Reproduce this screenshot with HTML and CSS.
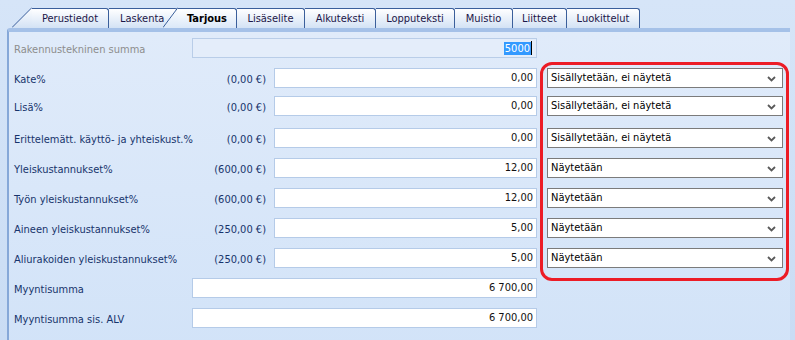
FILE: index.html
```html
<!DOCTYPE html>
<html lang="fi">
<head>
  <meta charset="UTF-8">
  <title>Tarjous</title>
  <link rel="stylesheet" href="styles.css">
</head>
<body>

<div class="tabs">
  <div class="tab first">
    <svg class="slant" width="20" height="21" viewBox="0 0 20 21">
      <defs>
        <linearGradient id="tabfill" x1="0" y1="0" x2="0" y2="1">
          <stop offset="0" stop-color="#ffffff"/>
          <stop offset="1" stop-color="#d3e2f5"/>
        </linearGradient>
      </defs>
      <polygon points="0,21 20,0.5 20,21" fill="url(#tabfill)"/>
      <line x1="0" y1="20.5" x2="20" y2="0.5" stroke="#3b5f9b" stroke-width="1"/>
    </svg>
    <span class="tab-body w77">Perustiedot</span>
  </div>
  <div class="tab">
    <span class="tab-body w69 left">Laskenta</span>
  </div>
  <div class="tab active">
    <svg class="slant" width="15" height="21" viewBox="0 0 15 21">
      <defs>
        <linearGradient id="tabsel" x1="0" y1="0" x2="0" y2="1">
          <stop offset="0" stop-color="#ffffff"/>
          <stop offset="1" stop-color="#dbe8f8"/>
        </linearGradient>
      </defs>
      <polygon points="0,21 15,0.5 15,21" fill="url(#tabsel)"/>
      <line x1="0" y1="20.5" x2="15" y2="0.5" stroke="#3b5f9b" stroke-width="1"/>
    </svg>
    <span class="tab-body w59">Tarjous</span>
  </div>
  <div class="tab"><span class="tab-body w68">Lisäselite</span></div>
  <div class="tab"><span class="tab-body w71">Alkuteksti</span></div>
  <div class="tab"><span class="tab-body w79">Lopputeksti</span></div>
  <div class="tab"><span class="tab-body w58">Muistio</span></div>
  <div class="tab"><span class="tab-body w54">Liitteet</span></div>
  <div class="tab"><span class="tab-body w73">Luokittelut</span></div>
</div>

<div class="panel">

  <div class="row first-row">
    <span class="label muted">Rakennustekninen summa</span>
    <div class="field wide disabled"><span class="selection">5000</span><span class="caret"></span></div>
  </div>

  <div class="row">
    <span class="label">Kate%</span>
    <span class="amount">(0,00 €)</span>
    <div class="field">0,00</div>
    <div class="select">Sisällytetään, ei näytetä
      <svg class="chevron" width="9" height="6" viewBox="0 0 9 6"><polyline points="1,1 4.5,4.5 8,1" fill="none" stroke="#5a5a5a" stroke-width="1.8"/></svg>
    </div>
  </div>

  <div class="row tight">
    <span class="label">Lisä%</span>
    <span class="amount">(0,00 €)</span>
    <div class="field">0,00</div>
    <div class="select">Sisällytetään, ei näytetä
      <svg class="chevron" width="9" height="6" viewBox="0 0 9 6"><polyline points="1,1 4.5,4.5 8,1" fill="none" stroke="#5a5a5a" stroke-width="1.8"/></svg>
    </div>
  </div>

  <div class="row loose">
    <span class="label">Erittelemätt. käyttö- ja yhteiskust.%</span>
    <span class="amount">(0,00 €)</span>
    <div class="field">0,00</div>
    <div class="select">Sisällytetään, ei näytetä
      <svg class="chevron" width="9" height="6" viewBox="0 0 9 6"><polyline points="1,1 4.5,4.5 8,1" fill="none" stroke="#5a5a5a" stroke-width="1.8"/></svg>
    </div>
  </div>

  <div class="row">
    <span class="label">Yleiskustannukset%</span>
    <span class="amount">(600,00 €)</span>
    <div class="field">12,00</div>
    <div class="select">Näytetään
      <svg class="chevron" width="9" height="6" viewBox="0 0 9 6"><polyline points="1,1 4.5,4.5 8,1" fill="none" stroke="#5a5a5a" stroke-width="1.8"/></svg>
    </div>
  </div>

  <div class="row">
    <span class="label">Työn yleiskustannukset%</span>
    <span class="amount">(600,00 €)</span>
    <div class="field">12,00</div>
    <div class="select">Näytetään
      <svg class="chevron" width="9" height="6" viewBox="0 0 9 6"><polyline points="1,1 4.5,4.5 8,1" fill="none" stroke="#5a5a5a" stroke-width="1.8"/></svg>
    </div>
  </div>

  <div class="row">
    <span class="label">Aineen yleiskustannukset%</span>
    <span class="amount">(250,00 €)</span>
    <div class="field">5,00</div>
    <div class="select">Näytetään
      <svg class="chevron" width="9" height="6" viewBox="0 0 9 6"><polyline points="1,1 4.5,4.5 8,1" fill="none" stroke="#5a5a5a" stroke-width="1.8"/></svg>
    </div>
  </div>

  <div class="row">
    <span class="label">Aliurakoiden yleiskustannukset%</span>
    <span class="amount">(250,00 €)</span>
    <div class="field">5,00</div>
    <div class="select">Näytetään
      <svg class="chevron" width="9" height="6" viewBox="0 0 9 6"><polyline points="1,1 4.5,4.5 8,1" fill="none" stroke="#5a5a5a" stroke-width="1.8"/></svg>
    </div>
  </div>

  <div class="row">
    <span class="label">Myyntisumma</span>
    <div class="field wide">6 700,00</div>
  </div>

  <div class="row">
    <span class="label">Myyntisumma sis. ALV</span>
    <div class="field wide">6 700,00</div>
  </div>

  <div class="highlight"></div>
</div>

</body>
</html>
```

FILE: styles.css
```css
body {
  margin: 0;
  width: 795px;
  height: 340px;
  overflow: hidden;
  font-family: 'DejaVu Sans Condensed', 'Liberation Sans', sans-serif;
  font-size: 11px;
  background: linear-gradient(#d6e5f8, #c9dcf4);
}
.tabs {
  display: flex;
  align-items: flex-end;
  height: 28px;
  padding-left: 12px;
  box-sizing: border-box;
}
.tab {
  display: flex;
  align-items: flex-end;
  height: 21px;
}
.slant {
  display: block;
}
.tab-body {
  display: block;
  height: 20px;
  line-height: 20px;
  box-sizing: border-box;
  border-top: 1px solid #3b5f9b;
  border-right: 1px solid #3b5f9b;
  border-radius: 0 3px 0 0;
  background: linear-gradient(#ffffff, #d3e2f5);
  color: #1c1648;
  text-align: center;
}
.tab-body.left {
  text-align: left;
  padding-left: 11px;
}
.tab.active {
  margin-left: -15px;
  z-index: 1;
}
.tab.active .tab-body {
  background: linear-gradient(#ffffff, #dbe8f8);
  color: #000;
  font-weight: bold;
}
.w54 { width: 54px; }
.w58 { width: 58px; }
.w59 { width: 59px; }
.w68 { width: 68px; }
.w69 { width: 69px; }
.w71 { width: 71px; }
.w73 { width: 73px; }
.w77 { width: 77px; }
.w79 { width: 79px; }

.panel {
  position: relative;
  margin-left: 7px;
  width: 783px;
  height: 320px;
  box-sizing: border-box;
  border-top: 4px solid #a5c1e8;
  border-left: 2px solid #86a8d8;
  border-top-left-radius: 3px;
  background: linear-gradient(#e0ebfa, #d2e3f8);
  padding: 6px 0 0 5px;
}
.row {
  display: flex;
  height: 20px;
  margin-top: 10px;
}
.row.first-row {
  margin-top: 0;
}
.row.tight {
  margin-top: 8px;
}
.row.loose {
  margin-top: 12px;
}
.label {
  width: 178px;
  flex: none;
  line-height: 20px;
  margin-top: 2px;
  color: #17346c;
  white-space: nowrap;
}
.label.muted {
  color: #8d8d8d;
}
.amount {
  width: 74px;
  flex: none;
  line-height: 20px;
  margin-top: 2px;
  text-align: right;
  color: #17346c;
}
.field {
  width: 263px;
  height: 20px;
  flex: none;
  margin-left: 8px;
  box-sizing: border-box;
  border: 1px solid #b5cbe8;
  background: #fff;
  text-align: right;
  line-height: 18px;
  padding-right: 3px;
  color: #111;
}
.field.wide {
  width: 345px;
  margin-left: 0;
}
.field.disabled {
  background: #e4edfa;
  border-color: #b9cde8;
  display: flex;
  justify-content: flex-end;
  align-items: center;
  padding-right: 4px;
}
.selection {
  background: #3399ff;
  color: #fff;
  line-height: 13px;
  padding: 0 1px;
}
.caret {
  width: 1px;
  height: 14px;
  background: #000;
}
.select {
  width: 236px;
  height: 20px;
  flex: none;
  margin-left: 10px;
  box-sizing: border-box;
  border: 1px solid #7b7b7b;
  background: #fff;
  padding-left: 3px;
  line-height: 18px;
  color: #000;
  display: flex;
  justify-content: space-between;
  align-items: center;
}
.chevron {
  margin-right: 6px;
  margin-top: 1px;
}
.highlight {
  position: absolute;
  left: 531px;
  top: 30px;
  width: 249px;
  height: 219px;
  box-sizing: border-box;
  border: 3px solid #ec1c26;
  border-radius: 12px;
}
```
